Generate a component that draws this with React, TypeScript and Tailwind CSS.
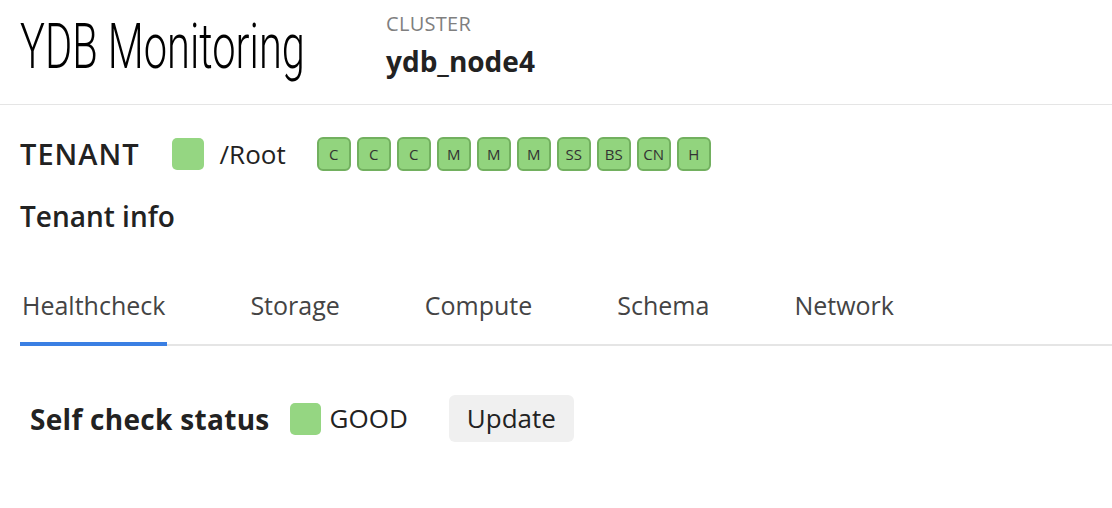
import React, { useState } from 'react';

const badges = ['C', 'C', 'C', 'M', 'M', 'M', 'SS', 'BS', 'CN', 'H'];
const tabs = ['Healthcheck', 'Storage', 'Compute', 'Schema', 'Network'];

const font = { fontFamily: '"Open Sans", "Noto Sans", sans-serif' };

const App: React.FC = () => {
  const [activeTab, setActiveTab] = useState('Healthcheck');

  return (
    <div className="min-h-[508px] bg-white text-[#222]" style={font}>
      <header className="h-[105px] border-b border-[#e5e5e5] flex pl-5">
        <div className="w-[366px] pt-[15px]">
          <div
            className="origin-left scale-x-[0.66] whitespace-nowrap text-[63px] leading-none font-light text-black"
            style={{ fontFamily: 'Roboto, sans-serif' }}
          >
            YDB Monitoring
          </div>
        </div>
        <div className="flex flex-col pt-[11px]">
          <span className="text-[20px] leading-[26px] tracking-[0.3px] text-[#7f7f7f] uppercase">Cluster</span>
          <span className="mt-[8px] text-[28px] leading-[32px] font-bold text-[#222]">ydb_node4</span>
        </div>
      </header>

      <main className="pl-5">
        <div className="flex items-center mt-[32px] h-[34px]">
          <span className="text-[29px] font-semibold tracking-[1px] mr-[32px]">TENANT</span>
          <span className="w-[32px] h-[32px] rounded-[5px] bg-[#95d682]" />
          <span className="ml-[16px] text-[26px] text-[#222]">/Root</span>
          <div className="flex gap-[6px] ml-[31px]">
            {badges.map((b, i) => (
              <span
                key={i}
                className="w-[34px] h-[34px] rounded-[6px] border-2 border-[#72b05f] bg-[#92d47e] flex items-center justify-center text-[15px] text-[#333]"
              >
                {b}
              </span>
            ))}
          </div>
        </div>

        <h2 className="mt-[28px] text-[28px] leading-[34px] font-semibold">Tenant info</h2>

        <div className="mt-[56px] flex border-b-2 border-[#e5e5e5]">
          {tabs.map((t) => (
            <button
              key={t}
              onClick={() => setActiveTab(t)}
              className="relative mr-[81px] px-[2px] pb-[23px] text-[25px] leading-[32px] text-[#444]"
            >
              {t}
              {activeTab === t && (
                <span className="absolute left-0 right-0 -bottom-[2px] h-[4px] bg-[#3a7fe3]" />
              )}
            </button>
          ))}
        </div>

        <div className="flex items-center mt-[49px] pl-[10px]">
          <span className="text-[28px] font-bold tracking-[0.3px]">Self check status</span>
          <span className="ml-[20px] w-[31px] h-[32px] rounded-[5px] bg-[#95d682]" />
          <span className="ml-[9px] text-[26px]">GOOD</span>
          <button className="ml-[41px] h-[47px] px-[18px] rounded-[6px] bg-[#f0f0f0] text-[26px]">
            Update
          </button>
        </div>
      </main>
    </div>
  );
};

export default App;
